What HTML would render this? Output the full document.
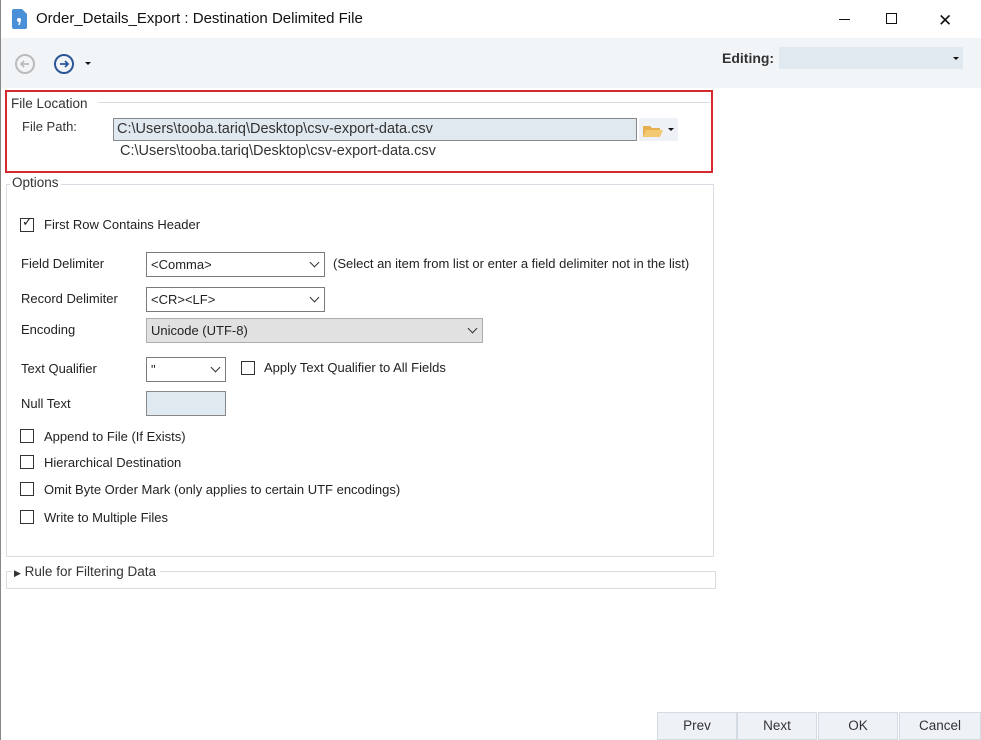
<!DOCTYPE html><html><head><style>
*{box-sizing:border-box;margin:0;padding:0}
body{width:981px;height:740px;position:relative;background:#fff;font-family:"Liberation Sans",sans-serif;font-size:13px;color:#222;overflow:hidden}
.a{position:absolute}
.cb{position:absolute;width:14px;height:14px;border:1px solid #333;background:#fff}
.dd{position:absolute;border:1px solid #7a7a7a;background:#fff;padding:4px 4px;font-size:13px;line-height:15px}
.chev{position:absolute;right:6px;top:6px;width:7px;height:7px;border-right:1.3px solid #333;border-bottom:1.3px solid #333;transform:rotate(45deg)}
.btn{position:absolute;top:712px;width:80px;height:28px;background:#eef2f7;border:1px solid #d5dbe3;text-align:center;line-height:26px;font-size:13.5px;color:#333}
</style></head><body>
<div class="a" style="left:0;top:0;width:1px;height:740px;background:#888"></div>
<svg class="a" style="left:11px;top:9px" width="16" height="20"><path d="M1 2a2 2 0 0 1 2-2h8l5 5v13a2 2 0 0 1-2 2H3a2 2 0 0 1-2-2z" fill="#4a90d9"/><circle cx="8" cy="11" r="2" fill="#fff"/><path d="M9 12l-1 4" stroke="#fff" stroke-width="1.5"/></svg>
<div class="a" style="left:36px;top:10px;font-size:15px;color:#111">Order_Details_Export : Destination Delimited File</div>
<div class="a" style="left:839px;top:19px;width:11px;height:1px;background:#111"></div>
<div class="a" style="left:886px;top:13px;width:11px;height:11px;border:1px solid #111"></div>
<div class="a" style="left:938px;top:11px;font-size:17px;color:#111">✕</div>
<div class="a" style="left:1px;top:38px;width:980px;height:50px;background:#f2f5f8"></div>
<svg class="a" style="left:14px;top:53px" width="22" height="22"><circle cx="11" cy="11" r="9" fill="none" stroke="#bbb" stroke-width="2"/><path d="M15 11H7M10 8l-3 3 3 3" fill="none" stroke="#bbb" stroke-width="1.8"/></svg>
<svg class="a" style="left:53px;top:53px" width="22" height="22"><circle cx="11" cy="11" r="9" fill="none" stroke="#2b5797" stroke-width="2"/><path d="M7 11h8M12 8l3 3-3 3" fill="none" stroke="#2b5797" stroke-width="1.8"/></svg>
<div class="a" style="left:85px;top:62px;border-left:3px solid transparent;border-right:3px solid transparent;border-top:3px solid #111"></div>
<div class="a" style="left:722px;top:50px;font-size:14px;font-weight:bold;color:#333">Editing:</div>
<div class="a" style="left:779px;top:47px;width:184px;height:22px;background:#e0e8f0"><div class="a" style="right:4px;top:10px;border-left:3px solid transparent;border-right:3px solid transparent;border-top:3px solid #111"></div></div>
<div class="a" style="left:5px;top:90px;width:708px;height:83px;border:2px solid #d42a2f"></div>
<div class="a" style="left:98px;top:102px;width:612px;height:1px;background:#d8dde3"></div>
<div class="a" style="left:11px;top:96px;font-size:13.5px;color:#333">File Location</div>
<div class="a" style="left:22px;top:119px;color:#333">File Path:</div>
<div class="a" style="left:113px;top:118px;width:524px;height:23px;border:1px solid #888;background:#e0e8f0;padding:2px 3px;font-size:14.5px;color:#333;white-space:nowrap">C:\Users\tooba.tariq\Desktop\csv-export-data.csv</div>
<div class="a" style="left:639px;top:118px;width:39px;height:23px;background:#eef1f5"></div>
<svg class="a" style="left:642px;top:123px" width="22" height="16"><path d="M1 3h7l2 2h8v9H1z" fill="#e4b050"/><path d="M4 7h17l-3 7H1z" fill="#f2c870"/></svg>
<div class="a" style="left:668px;top:128px;border-left:3px solid transparent;border-right:3px solid transparent;border-top:3px solid #111"></div>
<div class="a" style="left:120px;top:143px;font-size:14.5px;color:#333;white-space:nowrap">C:\Users\tooba.tariq\Desktop\csv-export-data.csv</div>
<div class="a" style="left:6px;top:184px;width:708px;height:373px;border:1px solid #d8dde3"></div>
<div class="a" style="left:10px;top:175px;background:#fff;padding:0 2px;font-size:13.5px;color:#333">Options</div>
<div class="cb" style="left:20px;top:218px"></div><div class="a" style="left:22px;top:214px;font-size:13px">✓</div>
<div class="a" style="left:44px;top:217px">First Row Contains Header</div>
<div class="a" style="left:21px;top:256px">Field Delimiter</div>
<div class="dd" style="left:146px;top:252px;width:179px;height:25px">&lt;Comma&gt;<div class="chev"></div></div>
<div class="a" style="left:333px;top:256px;white-space:nowrap">(Select an item from list or enter a field delimiter not in the list)</div>
<div class="a" style="left:21px;top:291px">Record Delimiter</div>
<div class="dd" style="left:146px;top:287px;width:179px;height:25px">&lt;CR&gt;&lt;LF&gt;<div class="chev"></div></div>
<div class="a" style="left:21px;top:322px">Encoding</div>
<div class="dd" style="left:146px;top:318px;width:337px;height:25px;background:#e1e1e1;border-color:#adadad">Unicode (UTF-8)<div class="chev"></div></div>
<div class="a" style="left:21px;top:361px">Text Qualifier</div>
<div class="dd" style="left:146px;top:357px;width:80px;height:25px">"<div class="chev"></div></div>
<div class="cb" style="left:241px;top:361px"></div>
<div class="a" style="left:264px;top:360px">Apply Text Qualifier to All Fields</div>
<div class="a" style="left:21px;top:396px">Null Text</div>
<div class="a" style="left:146px;top:391px;width:80px;height:25px;border:1px solid #888;background:#e0e8f0"></div>
<div class="cb" style="left:20px;top:429px"></div><div class="a" style="left:44px;top:429px">Append to File (If Exists)</div>
<div class="cb" style="left:20px;top:455px"></div><div class="a" style="left:44px;top:455px">Hierarchical Destination</div>
<div class="cb" style="left:20px;top:482px"></div><div class="a" style="left:44px;top:482px">Omit Byte Order Mark (only applies to certain UTF encodings)</div>
<div class="cb" style="left:20px;top:510px"></div><div class="a" style="left:44px;top:510px">Write to Multiple Files</div>
<div class="a" style="left:6px;top:571px;width:710px;height:18px;border:1px solid #d8dde3"></div>
<div class="a" style="left:12px;top:564px;background:#fff;padding:0 4px 0 2px;font-size:13.5px;color:#333"><span style="font-size:9px">▶</span> Rule for Filtering Data</div>
<div class="btn" style="left:657px">Prev</div>
<div class="btn" style="left:737px">Next</div>
<div class="btn" style="left:818px">OK</div>
<div class="btn" style="left:899px;width:82px">Cancel</div>
</body></html>
